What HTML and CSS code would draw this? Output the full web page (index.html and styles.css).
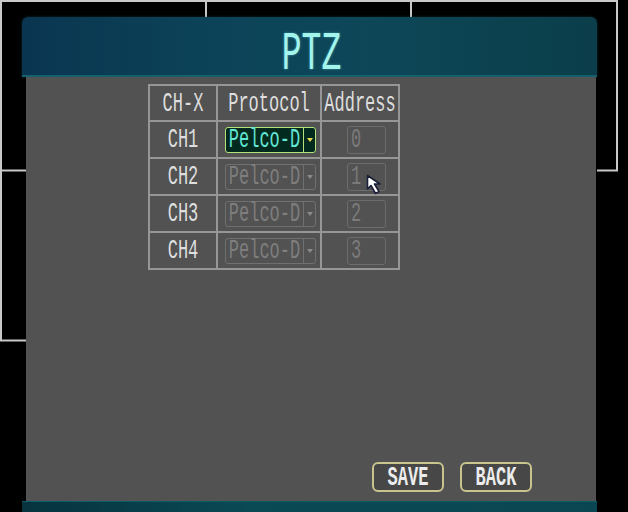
FILE: index.html
```html
<!DOCTYPE html>
<html>
<head>
<meta charset="utf-8">
<link rel="stylesheet" href="styles.css">
</head>
<body>
<div class="screen">
  <svg class="grid" width="628" height="512" viewBox="0 0 628 512">
    <g stroke="#c9c9c9" stroke-width="2" fill="none">
      <path d="M0 1 H618"/>
      <path d="M1 0 V341"/>
      <path d="M206 0 V18"/>
      <path d="M411 0 V18"/>
      <path d="M0 170.5 H26"/>
      <path d="M0 340.5 H26"/>
      <path d="M617 0 V171"/>
      <path d="M597 170.5 H618"/>
    </g>
  </svg>
  <div class="dialog">
    <div class="header"><span class="title">PTZ</span></div>
    <div class="panel">
      <table class="ptz">
        <tr class="head">
          <th class="c1"><span class="t">CH-X</span></th>
          <th class="c2"><span class="t">Protocol</span></th>
          <th class="c3"><span class="t">Address</span></th>
        </tr>
        <tr>
          <td><span class="t">CH1</span></td>
          <td><div class="select active"><span class="val"><span class="t">Pelco-D</span></span><span class="arrow"></span></div></td>
          <td><div class="addr"><span class="t">0</span></div></td>
        </tr>
        <tr>
          <td><span class="t">CH2</span></td>
          <td><div class="select"><span class="val"><span class="t">Pelco-D</span></span><span class="arrow"></span></div></td>
          <td><div class="addr"><span class="t">1</span></div></td>
        </tr>
        <tr>
          <td><span class="t">CH3</span></td>
          <td><div class="select"><span class="val"><span class="t">Pelco-D</span></span><span class="arrow"></span></div></td>
          <td><div class="addr"><span class="t">2</span></div></td>
        </tr>
        <tr>
          <td><span class="t">CH4</span></td>
          <td><div class="select"><span class="val"><span class="t">Pelco-D</span></span><span class="arrow"></span></div></td>
          <td><div class="addr"><span class="t">3</span></div></td>
        </tr>
      </table>
      <div class="actions">
        <button class="btn"><span class="t">SAVE</span></button>
        <button class="btn"><span class="t">BACK</span></button>
      </div>
    </div>
    <div class="footer"></div>
  </div>
  <svg class="cursor" width="20" height="22" viewBox="0 0 20 22">
    <path d="M1.5 1.5 L1.5 15 L5 11.5 L9.5 19.5 L13 17.5 L8.5 10 L14 10 Z" fill="#ffffff" stroke="#1a1f3a" stroke-width="1.6" stroke-linejoin="round"/>
  </svg>
</div>
</body>
</html>
```
FILE: styles.css
```css
html, body {
  margin: 0;
  padding: 0;
  background: #000;
}
.screen {
  position: relative;
  width: 628px;
  height: 512px;
  overflow: hidden;
  background: #000;
  font-family: "Liberation Mono", "DejaVu Sans Mono", monospace;
}
.grid {
  position: absolute;
  left: 0;
  top: 0;
}
.dialog {
  position: relative;
  margin-left: 22px;
  padding-top: 17px;
  width: 575px;
}
.header {
  height: 58px;
  border-radius: 6px 6px 0 0;
  background: linear-gradient(to right, #0a3550 0%, #0c4258 30%, #0d4758 60%, #0b3e4a 100%);
  border-bottom: 2px solid #14606c;
  display: flex;
  justify-content: center;
  align-items: center;
  box-shadow: 0 0 3px rgba(20, 90, 100, 0.5);
}
.title {
  display: inline-block;
  font-size: 33px;
  color: #a4f4ee;
  transform: scaleY(1.65);
  margin-top: 16px;
  margin-left: 4px;
  text-shadow: 0 0 2px rgba(120, 240, 240, 0.5);
}
.panel {
  margin: 0 1px 0 4px;
  height: 424px;
  background: #525252;
  display: flex;
  flex-direction: column;
}
.ptz {
  align-self: flex-start;
  border-collapse: collapse;
  margin: 7px 0 0 122px;
  color: #dedede;
}
.ptz th, .ptz td {
  border: 2px solid #969696;
  padding: 0;
  text-align: center;
  font-weight: normal;
  font-size: 17px;
  height: 35px;
}
.ptz .head th {
  height: 34px;
}
.c1 { width: 66px; }
.c2 { width: 102px; }
.c3 { width: 76px; }
.t {
  display: inline-block;
  transform: scaleY(1.6);
}
.select {
  display: flex;
  width: 89px;
  height: 24px;
  margin-left: 7px;
  border: 1.5px solid #707070;
  border-radius: 3px;
  color: #7e7e7e;
  align-items: stretch;
}
.select .val {
  flex: 1;
  display: flex;
  align-items: center;
  justify-content: center;
  border-right: 1.5px solid #707070;
  font-size: 17px;
}
.select .arrow {
  width: 11px;
  position: relative;
}
.select .arrow::after {
  content: "";
  position: absolute;
  left: 3px;
  top: 10px;
  border-left: 3px solid transparent;
  border-right: 3px solid transparent;
  border-top: 4px solid #8a8a8a;
}
.select.active {
  background: #032a1e;
  border-color: #b4e27a;
  color: #62e6d6;
}
.select.active .val {
  border-right-color: #b4e27a;
}
.select.active .arrow::after {
  border-top-color: #e8d84a;
}
.addr {
  margin-left: 25px;
  border: 1.5px solid #6c6c6c;
  border-radius: 3px;
  color: #7a7a7a;
  display: flex;
  align-items: center;
  padding-left: 3px;
  box-sizing: border-box;
  width: 39px;
  height: 28px;
}
.actions {
  margin-top: auto;
  display: flex;
  justify-content: flex-end;
  gap: 16px;
  padding: 0 64px 9px 0;
}
.btn {
  width: 72px;
  height: 30px;
  border: 2px solid #c8c48e;
  border-radius: 6px;
  background: #474747;
  color: #ececec;
  font-family: "Liberation Mono", "DejaVu Sans Mono", monospace;
  font-weight: bold;
  font-size: 17px;
  padding: 0;
  display: flex;
  align-items: center;
  justify-content: center;
}
.footer {
  height: 11px;
  background: linear-gradient(to right, #06333e 0%, #0a4a55 40%, #0a4652 100%);
  border-top: 1px solid #0d5c66;
}
.cursor {
  position: absolute;
  left: 366px;
  top: 174px;
}
```
